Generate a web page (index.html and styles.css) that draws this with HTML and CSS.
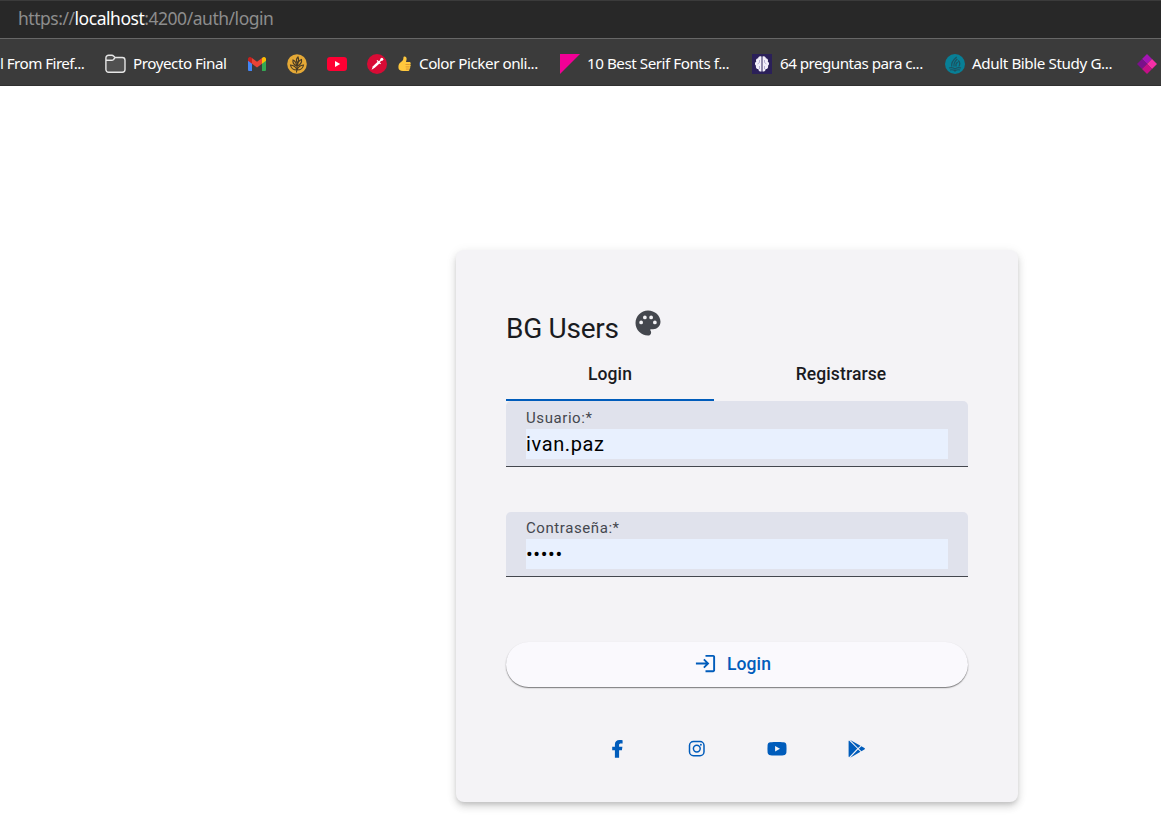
FILE: index.html
```html
<!DOCTYPE html>
<html lang="es">
<head>
<meta charset="utf-8">
<title>BG Users</title>
<link rel="stylesheet" href="styles.css">
</head>
<body>
<header class="browser">
  <div class="address"><span class="url">https://<b>localhost</b>:4200/auth/login</span></div>
  <nav class="bookmarks">
    <span class="bm-text bm-first">l From Firef...</span>
    <svg class="ico folder" viewBox="0 0 21 20" fill="#505050" stroke="#e6e6e6" stroke-width="1.4"><path d="M.9 15V4A2.7 2.7 0 0 1 3.6 1.3h3.2c.9 0 1.4.3 2 .9L10 3.5h7.300a2.700 2.700 0 0 1 2.700 2.700v9.300a2.700 2.700 0 0 1-2.700 2.700H3.600A2.700 2.700 0 0 1 .9 15.500zM1 6.300h5.700c.8 0 1.300-.2 1.900-.8L10 3.500"/></svg>
    <span class="bm-text bm-proyecto">Proyecto Final</span>
    <svg class="ico gmail" viewBox="0 0 18 14"><path fill="#4285f4" d="M0 2v10.700C0 13.500.5 14 1.300 14H4V6z"/><path fill="#34a853" d="M18 2v10.700c0 .8-.5 1.300-1.300 1.300H14V6z"/><path fill="#ea4335" d="M4 1l5 3.800L14 1v5.700l-5 3.800-5-3.800z"/><path fill="#c5221f" d="M0 2C0 .3 1.900-.6 3.300.4L4 1v5.700L0 3.800z"/><path fill="#fbbc04" d="M18 2c0-1.700-1.900-2.600-3.300-1.600L14 1v5.700l4-2.900z"/></svg>
    <svg class="ico wheat" viewBox="0 0 20 20"><circle cx="10" cy="10" r="9.800" fill="#e5a936"/><g fill="none" stroke="#493b25" stroke-width="1.100"><path d="M9.500 18.500l1-9M10 16C7 16 4 14.500 3.500 11c3 .3 5.500 2 6.500 5zM10 16c3 0 6-1.500 6.500-5-3 .3-5.500 2-6.500 5zM9.500 12C6.500 10.500 5.500 8.500 6 6c2 1 3.500 3 3.500 6zM10.500 12c3-1.500 4.500-4 4-6.500-2.500 1-4 3.500-4 6.500zM10.300 9C9 7 9.500 4.500 11 3c1 2 .8 4-.7 6z"/></g></svg>
    <svg class="ico yt" viewBox="0 0 20 14"><rect width="20" height="14" rx="3.200" fill="#ff0033"/><path fill="#fff" d="M8 4l5.200 3L8 10z"/></svg>
    <svg class="ico picker" viewBox="0 0 20 20"><circle cx="10" cy="10" r="10" fill="#d80b35"/><path d="M4.600 15.800l1.300-3.600 5-4.800 1.900 1.800-5 4.600z" fill="#fff"/><path d="M10 6.400l3.600 3.500M12 8l3.300-3" stroke="#fff" stroke-width="1.300" fill="none"/><circle cx="14.800" cy="5.300" r="1.500" fill="#fff"/></svg>
    <svg class="ico thumb" viewBox="0 0 13 16"><path fill="#ffc83d" d="M6.400.5C8.300.3 8.900 2 8.500 3.800L8 6h3.300c1.500 0 1.900 1.600.9 2.400.9.700.7 1.900-.2 2.300.6.800.3 1.800-.6 2.200.3 1.200-.5 2.100-1.700 2.100H5C2 15 .4 13.700.4 11.200c0-2.500.8-4 2.600-5.200C5 4.700 5.400 3.300 5.400 1.700c0-.7.400-1.100 1-1.200z"/><path d="M7.500 8.500h4.300M7.700 10.900h4M7.900 13.100h3" stroke="#cf852b" stroke-width=".7"/></svg>
    <span class="bm-text bm-color">Color Picker onli...</span>
    <svg class="ico serif" viewBox="0 0 20 20"><path fill="#f20096" d="M0 0h20L0 20z"/></svg>
    <span class="bm-text bm-serif">10 Best Serif Fonts f...</span>
    <svg class="ico brain" viewBox="0 0 20 20"><path fill="#2b2059" d="M0 0h20v20H0z"/><path fill="#f2effa" d="M9.500 2.500C7 1.800 6.200 3.300 6.200 4.200 4 4.500 3.600 6.500 4.300 7.500 2.500 8.500 2.700 11 4 11.700c-.5 2 .6 3.300 2.300 3.300.2 2 1.700 2.800 3.200 2.500zm1 0c2.500-.7 3.300.8 3.300 1.700 2.200.3 2.600 2.300 1.900 3.300 1.800 1 1.600 3.500.3 4.200.5 2-.6 3.300-2.300 3.300-.2 2-1.700 2.800-3.200 2.500z"/><path d="M7.500 6v2.500L5.500 10M7.500 15v-3M12.500 6v2.500l2 1.500M12.500 15v-3" stroke="#a79fca" stroke-width=".8" fill="none"/></svg>
    <span class="bm-text bm-preg">64 preguntas para c...</span>
    <svg class="ico bible" viewBox="0 0 20 20"><circle cx="10" cy="10" r="10" fill="#087f96"/><path fill="none" stroke="#1d5260" stroke-width="1.200" d="M11.700 3C9 5.200 6 8.500 6.700 12.500M12.300 5C9.700 7.300 8.400 9.500 9 12.500M13.200 6.500c2 2 2 4 .6 6M12.700 8c-2.200 1.700-2.200 3-1.500 4.500M4 14c2.500-.8 4.500-.4 6 1 1.500-1.400 3.500-1.800 6-1M5 16c2-.5 3.700-.2 5 1 1.300-1.200 3-1.500 5-1"/></svg>
    <span class="bm-text bm-bible">Adult Bible Study G...</span>
    <svg class="ico gems" viewBox="0 0 20 20"><path fill="#a414b4" d="M10 0l5 5-5 5-5-5z"/><path fill="#7b0f8c" d="M5 5l5 5-5 5-5-5z"/><path fill="#f52fa6" d="M15 5l5 5-5 5-5-5z"/><path fill="#c40f87" d="M10 10l5 5-5 5-5-5z"/></svg>
  </nav>
</header>
<main class="page">
  <section class="card">
    <div class="heading">
      <h1 class="title">BG Users</h1>
      <svg class="palette" viewBox="0 0 24 24"><path d="M12 2C6.490 2 2 6.490 2 12s4.490 10 10 10c1.380 0 2.500-1.120 2.500-2.500 0-.61-.23-1.200-.64-1.670-.08-.1-.13-.21-.13-.33 0-.28.22-.5.5-.5H16c3.310 0 6-2.690 6-6 0-4.960-4.490-9-10-9zm5.500 11a1.500 1.500 0 1 1 0-3 1.500 1.500 0 0 1 0 3zm-3-4a1.500 1.500 0 1 1 0-3 1.500 1.500 0 0 1 0 3zM5 11.500a1.500 1.500 0 1 1 3 0 1.500 1.500 0 0 1-3 0zm6-4a1.500 1.500 0 1 1-3 0 1.500 1.500 0 0 1 3 0z"/></svg>
    </div>
    <div class="tabs"><div class="tab active">Login</div><div class="tab tab-wide">Registrarse</div></div>
    <label class="field"><span class="label">Usuario:*</span><input class="input" type="text" value="ivan.paz"></label>
    <label class="field field-pass"><span class="label">Contraseña:*</span><input class="input pass" type="password" value="admin"></label>
    <button class="submit" type="button">
      <svg class="enter" viewBox="0 0 24 24"><path d="M11 7 9.600 8.400l2.600 2.600H2v2h10.200l-2.600 2.600L11 17l5-5zm9 12h-8v2h8c1.100 0 2-.9 2-2V5c0-1.100-.9-2-2-2h-8v2h8z"/></svg>
      <span>Login</span>
    </button>
    <div class="social">
      <svg viewBox="0 0 20 20"><path d="M7.900 18.800v-7.600H5.200V7.700h2.700V5.600C7.900 2.600 9.600 1 12.500 1c1.200 0 3.100.2 3.100.2v3.200H14c-1.400 0-1.900.6-1.900 1.400v1.900h3.300l-.5 3.500h-2.800v7.600z"/></svg>
      <svg viewBox="0 0 20 20" fill="none" stroke="#005cbb" stroke-width="1.500"><rect x="2.500" y="2.500" width="14.500" height="14.200" rx="4"/><circle cx="9.800" cy="9.600" r="3.400"/><circle class="dot" cx="13.900" cy="5.700" r=".95" stroke="none"/></svg>
      <svg viewBox="0 0 20 20"><path fill-rule="evenodd" d="M3.500 3.300C7 2.900 13 2.900 16.500 3.300c2 .2 2.700 1.100 2.900 2.700.2 2.500.2 5 0 7.500-.2 1.600-.9 2.500-2.900 2.700-3.500.4-9.500.4-13 0C1.500 16 .8 15.100.6 13.500.4 11 .4 8.500.6 6c.2-1.600.9-2.500 2.900-2.700zM8.100 7v5.500l4.900-2.750z"/></svg>
      <svg viewBox="0 0 20 20"><path d="M2 1.500l8.300 8.100L2 18.300c-.3-.3-.4-.7-.4-1.200V2.600c0-.5.1-.9.400-1.100zM3.200.9l10.300 5.900-2.500 2.200zM3.200 18.700l7.800-8.200 2.500 2.200zM14.400 7.300l3 1.800c.7.400.7 1 0 1.400l-3 1.800-2.600-2.600z"/></svg>
    </div>
  </section>
</main>
</body>
</html>
```
FILE: styles.css
```css
* { box-sizing: border-box; }
body { margin: 0; height: 818px; overflow: hidden; background: #fff; font-family: Roboto, sans-serif; }
svg { display: block; flex: none; }

.browser { height: 86px; background: #3b3b3b; font-family: "Noto Sans", sans-serif; border-bottom: 1px solid #303030; }
.address { height: 39px; padding: 0 18px 3px; display: flex; align-items: center; background: #282828; border-top: 1px solid #3b3b3b; border-bottom: 1px solid #676767; color: #8d8d8d; font-size: 17.5px; }
.url { letter-spacing: -0.47px; }
.url b { color: #fff; font-weight: 400; }

.bookmarks { height: 46px; padding-top: 3px; display: flex; align-items: center; overflow: hidden; color: #fff; font-size: 15.2px; }
.bm-text { flex: none; white-space: nowrap; letter-spacing: -0.46px; padding-bottom: 2px; }
.bm-first { width: 84px; letter-spacing: -0.55px; }
.bm-proyecto { width: 95px; }
.bm-color { width: 121px; }
.bm-serif { width: 142px; }
.bm-preg { width: 143px; letter-spacing: -0.53px; }
.bm-bible { width: 140px; letter-spacing: -0.4px; }
.ico { width: 20px; height: 20px; }
.folder { width: 21px; margin: 0 7px 0 21px; }
.gmail { width: 18px; height: 14px; margin: 0 21px 0 20px; }
.yt { height: 14px; margin: 0 20px; }
.thumb { width: 13px; height: 16px; margin: 0 8px 0 11px; }
.serif { margin: 0 7px 0 20px; }
.brain { margin: 0 8px 0 23px; }
.bible { margin: 0 7px 0 22px; }
.gems { margin-left: 25px; }

.page { padding: 164px 0 0 456px; }
.card { width: 562px; height: 552px; padding: 58px 50px 0; display: flex; flex-direction: column; background: #f4f3f6; border-radius: 8px; box-shadow: 0 3px 4px -1px rgba(0,0,0,.12), 0 5px 8px rgba(0,0,0,.11), 0 2px 12px rgba(0,0,0,.08); }
.heading { height: 41px; display: flex; align-items: flex-start; gap: 14px; }
.title { margin: 0; padding-top: 4px; font-size: 28px; line-height: 34px; font-weight: 400; letter-spacing: -0.28px; color: #1a1b1f; }
.palette { width: 30px; height: 30px; fill: #44474e; }

.tabs { height: 52px; display: flex; color: #1a1b1f; font-size: 17.5px; font-weight: 500; letter-spacing: .1px; }
.tab { width: 208px; display: flex; justify-content: center; padding-top: 15px; line-height: 20px; border-bottom: 2px solid transparent; }
.tab-wide { width: 254px; }
.active { border-color: #005cbb; }

.field { height: 66px; padding: 8px 20px 0; display: flex; flex-direction: column; background: #e0e2ec; border-bottom: 1px solid #44474e; border-radius: 5px 5px 0 0; }
.field-pass { height: 65px; margin-top: 45px; }
.field-pass .label { margin-top: -1px; }
.label { height: 20px; line-height: 18px; font-size: 15px; letter-spacing: .58px; color: #44474e; }
.input { width: 422px; height: 30px; padding: 0; border: 0; outline: 0; background: #e8f0fe; color: #000; font: 400 20px/30px Roboto, sans-serif; letter-spacing: .62px; }

.submit { height: 45px; margin-top: 65px; padding: 0 9px 2px 0; border: 0; border-radius: 23px; display: flex; align-items: center; justify-content: center; gap: 10px; background: #faf9fd; color: #005cbb; font: 500 17.5px/20px Roboto, sans-serif; letter-spacing: .1px; box-shadow: 0 1px 1px rgba(0,0,0,.4), 0 1px 2px rgba(0,0,0,.16); }
.enter { width: 23px; height: 23px; fill: #005cbb; }
.social { display: flex; gap: 60px; margin: 52px 0 0 101px; }
.social svg { width: 20px; height: 20px; fill: #005cbb; }
.social svg[stroke] { fill: none; }
.social .dot { fill: #005cbb; }
```
